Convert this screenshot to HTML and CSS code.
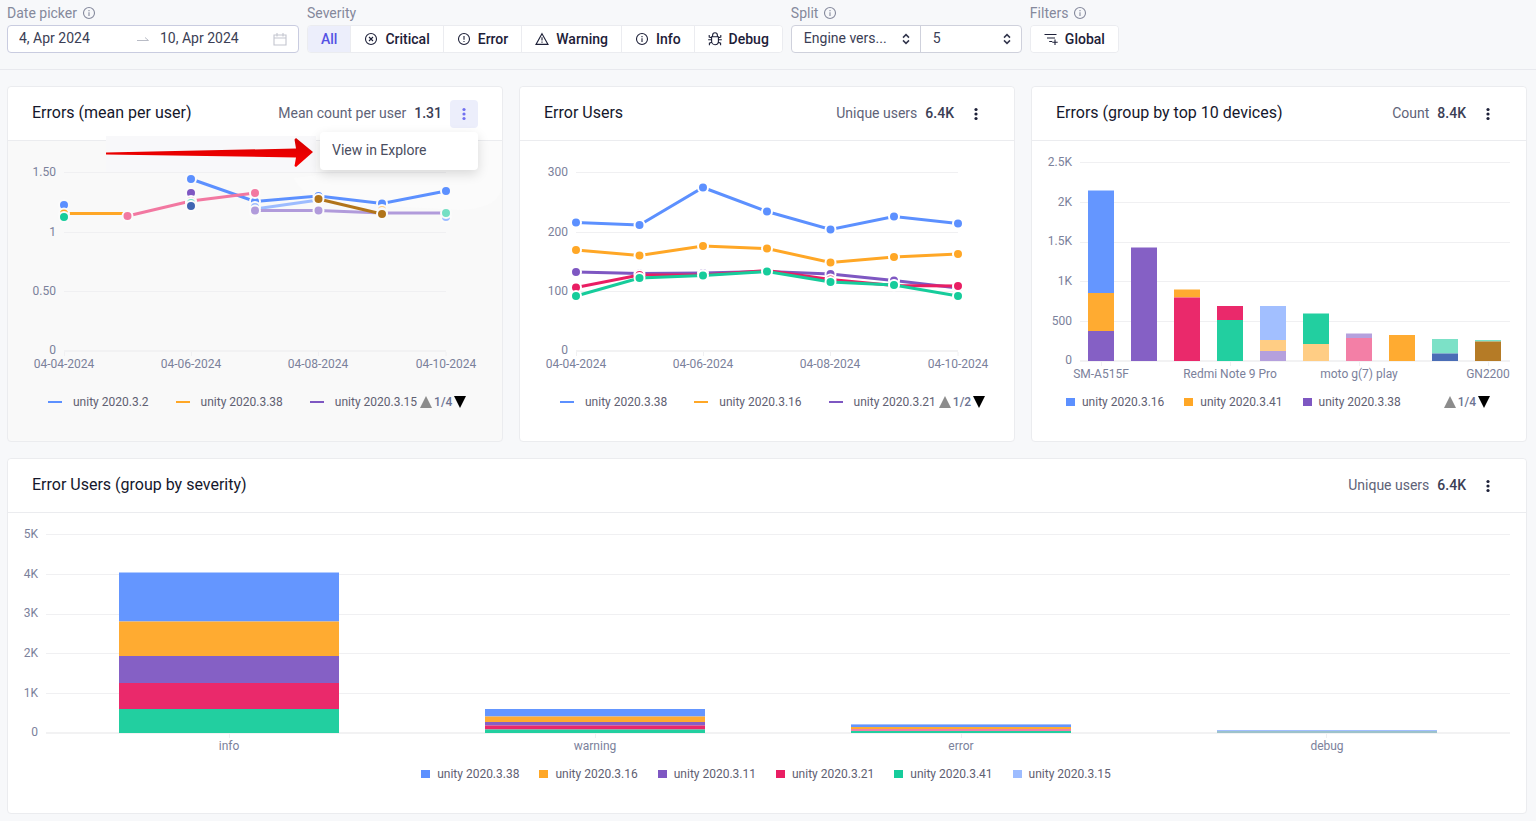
FILE: index.html
```html
<!DOCTYPE html>
<html lang="en">
<head>
<meta charset="utf-8">
<title>Errors dashboard</title>
<meta name="viewport" content="width=device-width, initial-scale=1">
<link rel="stylesheet" href="styles.css">
</head>
<body>
<svg class="sprite" aria-hidden="true">
  <symbol id="i-info" viewBox="0 0 14 14"><circle cx="7" cy="7" r="5.5"/><path d="M7 6.2v3.8M7 4v1.2"/></symbol>
  <symbol id="i-error" viewBox="0 0 14 14"><circle cx="7" cy="7" r="5.5"/><path d="M7 4v3.8M7 8.9v1.2"/></symbol>
  <symbol id="i-critical" viewBox="0 0 14 14"><circle cx="7" cy="7" r="5.5"/><path d="M5 5l4 4M9 5l-4 4"/></symbol>
  <symbol id="i-warning" viewBox="0 0 14 14"><path d="M7 1.7L13 12.4H1zM7 5.2v3.4M7 9.6v1.2"/></symbol>
  <symbol id="i-bug" viewBox="0 0 14 14"><path d="M3.6 4.7h6.8v4.6a3.4 3.4 0 0 1-6.8 0zM4.6 4.5V3.2a2.4 2.4 0 0 1 4.8 0v1.3M.2 7.8h3.4M10.4 7.8h3.4M3.6 5.8L1.2 5V3M10.4 5.8l2.4-.8V3M3.8 10.2l-2.4 1v2M10.2 10.2l2.4 1v2"/></symbol>
  <symbol id="i-filter" viewBox="0 0 14 14"><path d="M.5 2.5h12M3 6h8M5.2 9.5h3M11 7.5v5.5M8.3 10.3h5.4"/></symbol>
  <symbol id="i-updown" viewBox="0 0 10 12"><path d="M2 4.6L5 1.6l3 3M2 7.4l3 3 3-3"/></symbol>
  <symbol id="i-calendar" viewBox="0 0 14 14"><path d="M1 3h12v10H1zM1 6h12M4 1v3.5M10 1v3.5"/></symbol>
  <symbol id="i-swap" viewBox="0 0 12 6"><path d="M0 4.5h11.5L8 1.5"/></symbol>
  <symbol id="i-kebab" viewBox="0 0 14 14"><circle cx="7" cy="2.5" r="1.6"/><circle cx="7" cy="7" r="1.6"/><circle cx="7" cy="11.5" r="1.6"/></symbol>
  <symbol id="i-up" viewBox="0 0 12 12"><path d="M6 0l6 12H0z"/></symbol>
  <symbol id="i-down" viewBox="0 0 12 12"><path d="M0 0h12L6 12z"/></symbol>
</svg>

<header class="toolbar">
  <div class="field">
    <label class="field-label" for="date-from">Date picker <svg class="icon"><use href="#i-info"/></svg></label>
    <div class="date-range">
      <input class="date-input" id="date-from" type="text" value="4, Apr 2024">
      <svg class="icon-swap"><use href="#i-swap"/></svg>
      <input class="date-input" type="text" value="10, Apr 2024" aria-label="End date">
      <svg class="icon icon-faint"><use href="#i-calendar"/></svg>
    </div>
  </div>
  <div class="field">
    <span class="field-label" id="severity-label">Severity</span>
    <div class="segments" role="group" aria-labelledby="severity-label">
      <button class="segment segment-active" type="button">All</button>
      <button class="segment" type="button"><svg class="icon"><use href="#i-critical"/></svg>Critical</button>
      <button class="segment" type="button"><svg class="icon"><use href="#i-error"/></svg>Error</button>
      <button class="segment" type="button"><svg class="icon"><use href="#i-warning"/></svg>Warning</button>
      <button class="segment" type="button"><svg class="icon"><use href="#i-info"/></svg>Info</button>
      <button class="segment" type="button"><svg class="icon"><use href="#i-bug"/></svg>Debug</button>
    </div>
  </div>
  <div class="field">
    <label class="field-label" for="split">Split <svg class="icon"><use href="#i-info"/></svg></label>
    <div class="split">
      <div class="select-wrap select-wide"><select class="select" id="split"><option>Engine vers...</option></select><svg class="select-icon"><use href="#i-updown"/></svg></div>
      <div class="select-wrap"><select class="select" aria-label="Split count"><option>5</option></select><svg class="select-icon"><use href="#i-updown"/></svg></div>
    </div>
  </div>
  <div class="field">
    <span class="field-label">Filters <svg class="icon"><use href="#i-info"/></svg></span>
    <div class="segments"><button class="segment" type="button"><svg class="icon"><use href="#i-filter"/></svg>Global</button></div>
  </div>
</header>

<main class="board">
  <section class="card card-muted">
    <div class="card-head">
      <h2 class="card-title">Errors (mean per user)</h2>
      <span class="metric">Mean count per user</span><strong class="value">1.31</strong>
      <button class="more more-open" type="button" aria-label="More options"><svg class="icon-kebab"><use href="#i-kebab"/></svg></button>
      <div class="menu"><button class="menu-item" type="button">View in Explore</button></div>
    </div>
    <svg class="pointer" viewBox="0 0 210 36" aria-hidden="true">
      <defs><linearGradient id="red" x1="0" y1="0" x2="0" y2="1"><stop offset="0" stop-color="#d40000"/><stop offset="1" stop-color="#fb0000"/></linearGradient></defs>
      <rect class="pointer-bg" width="210" height="36"/>
      <path fill="url(#red)" d="M0 16.500L190 12.500L188.500 3.500L190 2L207 16L190 31L188.500 30L190 21.500L0 18.500z"/>
    </svg>
    <svg class="chart" viewBox="0 0 494 245" role="img" aria-label="Mean errors per user by day">
      <path class="veil" d="M286 37L336 31H308V0H494V46Q492 66 455 69L320 62Q292 54 286 37z"/>
      <path class="grid" d="M56 31.500H438M56 91.500H438M56 150.500H438"/>
      <path class="axis" d="M56 210H438"/><path class="grid" d="M56.500 211v4M183.500 211v4M310.500 211v4M438 211v4"/>
      <g class="tick end"><text x="48" y="35">1.50</text><text x="48" y="95">1</text><text x="48" y="154">0.50</text><text x="48" y="213">0</text></g>
      <g class="tick mid"><text x="56" y="227">04-04-2024</text><text x="183" y="227">04-06-2024</text><text x="310" y="227">04-08-2024</text><text x="438" y="227">04-10-2024</text></g>
      <g class="series blue"><path d="M183 38L247 60.500L310.500 55L374 62.500L438 50"/><circle cx="56" cy="64" r="5"/><circle cx="183" cy="38" r="5"/><circle cx="247" cy="60.500" r="5"/><circle cx="310.500" cy="55" r="5"/><circle cx="374" cy="62.500" r="5"/><circle cx="438" cy="50" r="5"/></g>
      <g class="series orange"><path d="M56 72.500H119.500"/><circle cx="56" cy="72.500" r="5"/></g>
      <g class="series purple"><circle cx="183" cy="52" r="5"/></g>
      <g class="series green"><circle cx="56" cy="76" r="5"/></g>
      <g class="series sky"><path d="M247 68L310.500 59"/><circle cx="247" cy="66" r="5"/><circle cx="310.500" cy="59" r="5"/><circle cx="438" cy="76" r="5"/></g>
      <g class="series peach"><circle cx="247" cy="71" r="5"/><circle cx="374" cy="69" r="5"/></g>
      <g class="series lavender"><path d="M247 69.500H310.500L374 72H438"/><circle cx="247" cy="69.500" r="5"/><circle cx="310.500" cy="69.500" r="5"/><circle cx="374" cy="72" r="5"/></g>
      <g class="series pink"><path d="M119.500 75L183 60L247 52"/><circle cx="119.500" cy="75" r="5"/><circle cx="183" cy="60" r="5"/><circle cx="247" cy="52" r="5"/></g>
      <g class="series mint"><circle cx="183" cy="62" r="5"/><circle cx="438" cy="72" r="5"/></g>
      <g class="series navy"><circle cx="183" cy="65" r="5"/></g>
      <g class="series brown"><path d="M310.500 58L374 73"/><circle cx="310.500" cy="58" r="5"/><circle cx="374" cy="73" r="5"/></g>
    </svg>
    <div class="legend legend-lines">
      <span class="key blue">unity 2020.3.2</span><span class="key orange">unity 2020.3.38</span><span class="key purple">unity 2020.3.15</span>
      <span class="pager"><svg class="tri tri-off"><use href="#i-up"/></svg>1/4<svg class="tri"><use href="#i-down"/></svg></span>
    </div>
  </section>

  <section class="card">
    <div class="card-head">
      <h2 class="card-title">Error Users</h2>
      <span class="metric">Unique users</span><strong class="value">6.4K</strong>
      <button class="more" type="button" aria-label="More options"><svg class="icon-kebab"><use href="#i-kebab"/></svg></button>
    </div>
    <svg class="chart" viewBox="0 0 494 245" role="img" aria-label="Error users by day">
      <path class="grid" d="M56 31.500H438M56 91.500H438M56 150.500H438"/>
      <path class="axis" d="M56 210H438"/><path class="grid" d="M56.500 211v4M183.500 211v4M310.500 211v4M438 211v4"/>
      <g class="tick end"><text x="48" y="35">300</text><text x="48" y="95">200</text><text x="48" y="154">100</text><text x="48" y="213">0</text></g>
      <g class="tick mid"><text x="56" y="227">04-04-2024</text><text x="183" y="227">04-06-2024</text><text x="310" y="227">04-08-2024</text><text x="438" y="227">04-10-2024</text></g>
      <g class="series blue"><path d="M56 81.500L119.500 84L183 46.500L247 70.500L310.500 88.500L374 75.500L438 82.500"/><circle cx="56" cy="81.500" r="5"/><circle cx="119.500" cy="84" r="5"/><circle cx="183" cy="46.500" r="5"/><circle cx="247" cy="70.500" r="5"/><circle cx="310.500" cy="88.500" r="5"/><circle cx="374" cy="75.500" r="5"/><circle cx="438" cy="82.500" r="5"/></g>
      <g class="series orange"><path d="M56 109L119.500 114.500L183 105L247 107.500L310.500 121.500L374 116L438 113"/><circle cx="56" cy="109" r="5"/><circle cx="119.500" cy="114.500" r="5"/><circle cx="183" cy="105" r="5"/><circle cx="247" cy="107.500" r="5"/><circle cx="310.500" cy="121.500" r="5"/><circle cx="374" cy="116" r="5"/><circle cx="438" cy="113" r="5"/></g>
      <g class="series purple"><path d="M56 131L119.500 132.500L183 132L247 130.500L310.500 133L374 139.500L438 147"/><circle cx="56" cy="131" r="5"/><circle cx="119.500" cy="132.500" r="5"/><circle cx="183" cy="132" r="5"/><circle cx="247" cy="130.500" r="5"/><circle cx="310.500" cy="133" r="5"/><circle cx="374" cy="139.500" r="5"/><circle cx="438" cy="147" r="5"/></g>
      <g class="series red"><path d="M56 146.500L119.500 134L183 134L247 129.500L310.500 138.500L374 144.500L438 145"/><circle cx="56" cy="146.500" r="5"/><circle cx="119.500" cy="134" r="5"/><circle cx="183" cy="134" r="5"/><circle cx="247" cy="129.500" r="5"/><circle cx="310.500" cy="138.500" r="5"/><circle cx="374" cy="144.500" r="5"/><circle cx="438" cy="145" r="5"/></g>
      <g class="series green"><path d="M56 155L119.500 137L183 134.500L247 130.500L310.500 141L374 144L438 155"/><circle cx="56" cy="155" r="5"/><circle cx="119.500" cy="137" r="5"/><circle cx="183" cy="134.500" r="5"/><circle cx="247" cy="130.500" r="5"/><circle cx="310.500" cy="141" r="5"/><circle cx="374" cy="144" r="5"/><circle cx="438" cy="155" r="5"/></g>
    </svg>
    <div class="legend legend-lines">
      <span class="key blue">unity 2020.3.38</span><span class="key orange">unity 2020.3.16</span><span class="key purple">unity 2020.3.21</span>
      <span class="pager"><svg class="tri tri-off"><use href="#i-up"/></svg>1/2<svg class="tri"><use href="#i-down"/></svg></span>
    </div>
  </section>

  <section class="card">
    <div class="card-head">
      <h2 class="card-title">Errors (group by top 10 devices)</h2>
      <span class="metric">Count</span><strong class="value">8.4K</strong>
      <button class="more" type="button" aria-label="More options"><svg class="icon-kebab"><use href="#i-kebab"/></svg></button>
    </div>
    <svg class="chart" viewBox="0 0 494 245" role="img" aria-label="Errors by device">
      <path class="grid" d="M48 21.500H478M48 61.500H478M48 101.500H478M48 140.500H478M48 180.500H478"/>
      <path class="axis" d="M48 220H478"/><path class="grid" d="M69.500 221v4M198.500 221v4M327.500 221v4M456.500 221v4"/>
      <g class="tick end"><text x="40" y="25">2.5K</text><text x="40" y="65">2K</text><text x="40" y="104">1.5K</text><text x="40" y="144">1K</text><text x="40" y="184">500</text><text x="40" y="223">0</text></g>
      <g class="tick mid"><text x="69" y="237">SM-A515F</text><text x="198" y="237">Redmi Note 9 Pro</text><text x="327" y="237">moto g(7) play</text><text x="456" y="237">GN2200</text></g>
      <g class="bars">
        <rect class="blue" x="56" y="49.500" width="26" height="102.500"/><rect class="orange" x="56" y="152" width="26" height="38"/><rect class="purple" x="56" y="190" width="26" height="30"/>
        <rect class="purple" x="99" y="106.500" width="26" height="113.500"/>
        <rect class="orange" x="142" y="148.500" width="26" height="8"/><rect class="red" x="142" y="156.500" width="26" height="63.500"/>
        <rect class="red" x="185" y="165" width="26" height="14"/><rect class="green" x="185" y="179" width="26" height="41"/>
        <rect class="sky" x="228" y="165" width="26" height="34"/><rect class="peach" x="228" y="199" width="26" height="11"/><rect class="lavender" x="228" y="210" width="26" height="10"/>
        <rect class="green" x="271" y="172.500" width="26" height="30.500"/><rect class="peach" x="271" y="203" width="26" height="17"/>
        <rect class="lavender" x="314" y="192.500" width="26" height="4.500"/><rect class="pink" x="314" y="197" width="26" height="23"/>
        <rect class="orange" x="357" y="194" width="26" height="26"/>
        <rect class="mint" x="400" y="198" width="26" height="14.500"/><rect class="navy" x="400" y="212.500" width="26" height="7.500"/>
        <rect class="mint" x="443" y="199" width="26" height="1.500"/><rect class="brown" x="443" y="200.500" width="26" height="19.500"/>
      </g>
    </svg>
    <div class="legend legend-bars">
      <span class="key blue">unity 2020.3.16</span><span class="key orange">unity 2020.3.41</span><span class="key purple">unity 2020.3.38</span>
      <span class="pager pager-far"><svg class="tri tri-off"><use href="#i-up"/></svg>1/4<svg class="tri"><use href="#i-down"/></svg></span>
    </div>
  </section>

  <section class="card card-wide">
    <div class="card-head">
      <h2 class="card-title">Error Users (group by severity)</h2>
      <span class="metric">Unique users</span><strong class="value">6.4K</strong>
      <button class="more" type="button" aria-label="More options"><svg class="icon-kebab"><use href="#i-kebab"/></svg></button>
    </div>
    <svg class="chart" viewBox="0 0 1518 245" role="img" aria-label="Error users by severity">
      <path class="grid" d="M38 21.500H1502M38 61.500H1502M38 101.500H1502M38 140.500H1502M38 180.500H1502"/>
      <path class="axis" d="M38 220H1502"/><path class="grid" d="M221.500 221v4M587.500 221v4M953.500 221v4M1318.500 221v4"/>
      <g class="tick end"><text x="30" y="25">5K</text><text x="30" y="65">4K</text><text x="30" y="104">3K</text><text x="30" y="144">2K</text><text x="30" y="184">1K</text><text x="30" y="223">0</text></g>
      <g class="tick mid"><text x="221" y="237">info</text><text x="587" y="237">warning</text><text x="953" y="237">error</text><text x="1319" y="237">debug</text></g>
      <g class="bars">
        <rect class="blue" x="111" y="59.500" width="220" height="49"/><rect class="orange" x="111" y="108.500" width="220" height="34.500"/><rect class="purple" x="111" y="143" width="220" height="27"/><rect class="red" x="111" y="170" width="220" height="26"/><rect class="green" x="111" y="196" width="220" height="24"/>
        <rect class="blue" x="477" y="196" width="220" height="7.500"/><rect class="orange" x="477" y="203.500" width="220" height="5.500"/><rect class="purple" x="477" y="209" width="220" height="3.500"/><rect class="red" x="477" y="212.500" width="220" height="4"/><rect class="green" x="477" y="216.500" width="220" height="3.500"/>
        <rect class="sky" x="843" y="211" width="220" height="1"/><rect class="blue" x="843" y="212" width="220" height="2"/><rect class="orange" x="843" y="214" width="220" height="2"/><rect class="pink" x="843" y="216" width="220" height="2"/><rect class="green" x="843" y="218" width="220" height="2"/>
        <rect class="sky" x="1209" y="217" width="220" height="1"/><rect class="debug-mix" x="1209" y="218" width="220" height="2"/>
      </g>
    </svg>
    <div class="legend legend-bars legend-center">
      <span class="key blue">unity 2020.3.38</span><span class="key orange">unity 2020.3.16</span><span class="key purple">unity 2020.3.11</span><span class="key red">unity 2020.3.21</span><span class="key green">unity 2020.3.41</span><span class="key sky">unity 2020.3.15</span>
    </div>
  </section>
</main>
</body>
</html>
```
FILE: styles.css
```css
* { box-sizing: border-box; }

body {
  margin: 0;
  background: #f7f8fa;
  color: #1d2038;
  font: 14px/16px Roboto, "Liberation Sans", sans-serif;
}

button, input, select { font: inherit; color: inherit; margin: 0; }
button { cursor: pointer; }

.sprite { display: none; }

.blue { --c: #5c90ff; }
.orange { --c: #ffa726; }
.purple { --c: #7e57c2; }
.red { --c: #e91e63; }
.green { --c: #16cc9b; }
.sky { --c: #9dbcff; }
.peach { --c: #ffca7d; }
.lavender { --c: #b19bdb; }
.pink { --c: #f278a1; }
.mint { --c: #75dfc4; }
.navy { --c: #4065b2; }
.brown { --c: #b1741a; }
.debug-mix { --c: #97bfc8; }

.icon {
  width: 14px;
  height: 14px;
  flex: none;
  fill: none;
  stroke: currentColor;
  stroke-width: 1.1;
}
.icon-faint { color: #c3c5cf; }

/* Toolbar */
.toolbar {
  display: flex;
  flex-wrap: wrap;
  gap: 8px;
  padding: 5px 9px 16px 7px;
  border-bottom: 1px solid #e8e9ee;
}
.field { display: flex; flex-direction: column; gap: 4px; }
.field-label {
  display: flex;
  align-items: center;
  gap: 5px;
  height: 16px;
  color: #85899c;
}
.date-range {
  display: flex;
  align-items: center;
  width: 292px;
  height: 28px;
  padding: 0 11px;
  background: #fff;
  border: 1px solid #c9cce0;
  border-radius: 4px;
  color: #3b3e55;
}
.date-input {
  flex: 1;
  min-width: 0;
  padding: 0 0 2px;
  border: 0;
  outline: 0;
  background: none;
}
.icon-swap {
  width: 12px;
  height: 6px;
  margin: 0 11px 0 5px;
  fill: none;
  stroke: #b9bcc6;
}
.segments {
  display: flex;
  height: 28px;
  background: #fff;
  border: 1px solid #ebecf0;
  border-radius: 4px;
  overflow: hidden;
}
.segment {
  display: flex;
  align-items: center;
  gap: 7px;
  padding: 0 13px;
  border: 0;
  background: #fff;
  font-weight: 500;
}
.segment + .segment { border-left: 1px solid #ebecf0; }
.segment-active { background: #eceefb; color: #5552e4; }
.split {
  display: flex;
  height: 28px;
  background: #fff;
  border: 1px solid #cfd1dc;
  border-radius: 4px;
}
.select-wrap { display: flex; position: relative; width: 100px; }
.select-wide { width: 129px; border-right: 1px solid #cfd1dc; }
.select {
  width: 100%;
  padding: 0 24px 2px 12px;
  border: 0;
  outline: 0;
  background: none;
  appearance: none;
  color: #3b3e55;
}
.select-icon {
  position: absolute;
  top: 7px;
  right: 9px;
  width: 10px;
  height: 12px;
  fill: none;
  stroke: #33364d;
  stroke-width: 1.5;
  pointer-events: none;
}

/* Cards */
.board {
  display: grid;
  grid-template-columns: repeat(3, minmax(0, 1fr));
  gap: 16px;
  padding: 16px 9px 7px 7px;
}
.card {
  position: relative;
  padding-bottom: 23px;
  background: #fff;
  border: 1px solid #ebecef;
  border-radius: 4px;
  --halo: #fff;
}
.card-muted { background: #f9f9f9; --halo: #fbfbfb; }
.card-wide { grid-column: 1 / -1; }
.card-head {
  position: relative;
  display: flex;
  align-items: center;
  height: 54px;
  padding: 0 24px;
  background: #fff;
  border-bottom: 1px solid #ebecef;
  border-radius: 4px 4px 0 0;
}
.card-title, .metric, .value { padding-bottom: 2px; }
.card-title {
  flex: 1;
  margin: 0;
  font-size: 16px;
  line-height: 20px;
  font-weight: 400;
  color: #15172c;
}
.metric { color: #606378; }
.value { margin: 0 8px; font-weight: 500; color: #3b3e55; }
.more {
  display: flex;
  align-items: center;
  justify-content: center;
  width: 28px;
  height: 28px;
  padding: 0;
  border: 0;
  border-radius: 4px;
  background: none;
}
.more-open { background: #eceefb; color: #716ff0; }
.icon-kebab { width: 14px; height: 14px; fill: currentColor; }
.menu {
  position: absolute;
  z-index: 2;
  top: 45px;
  right: 24px;
  width: 158px;
  background: #fff;
  border-radius: 4px;
  box-shadow: 0 4px 12px rgba(0, 0, 0, .14);
}
.menu-item {
  width: 100%;
  height: 38px;
  padding: 0 12px 2px;
  border: 0;
  background: none;
  text-align: left;
  color: #4a4d60;
}
.pointer {
  position: absolute;
  z-index: 1;
  top: 49px;
  right: 186px;
  width: 210px;
  height: 36px;
}
.pointer-bg { fill: #f8f8fa; }

/* Charts */
.chart { display: block; width: 100%; height: auto; }
.veil { fill: #fbfbfb; }
.grid { fill: none; stroke: #f0f0f2; }
.axis { fill: none; stroke: #f2f2f3; stroke-width: 2; }
.tick { font-size: 12px; fill: #7b819b; }
.end { text-anchor: end; }
.mid { text-anchor: middle; }
.series path { fill: none; stroke: var(--c); stroke-width: 3; }
.series circle { fill: var(--c); stroke: var(--halo); stroke-width: 2; }
.bars rect { fill: var(--c); fill-opacity: .95; }

/* Legends */
.legend {
  display: flex;
  align-items: center;
  height: 32px;
  font-size: 12px;
  color: #5f6072;
}
.legend-lines { gap: 27px; padding-left: 40px; }
.legend-bars { gap: 20px; padding: 0 36px 0 34px; }
.legend-center { justify-content: center; }
.key { display: flex; align-items: center; white-space: nowrap; }
.key::before { content: ""; background: var(--c); }
.legend-lines .key::before { width: 14px; height: 2px; margin-right: 11px; }
.legend-bars .key::before { width: 9px; height: 8px; margin-right: 7px; }
.pager {
  display: flex;
  align-items: center;
  gap: 2px;
  margin-left: -24px;
  font-weight: 500;
  color: #6c7391;
}
.pager-far { margin-left: auto; }
.tri { width: 12px; height: 12px; fill: #000; }
.tri-off { fill: #8c8c8c; }
```
